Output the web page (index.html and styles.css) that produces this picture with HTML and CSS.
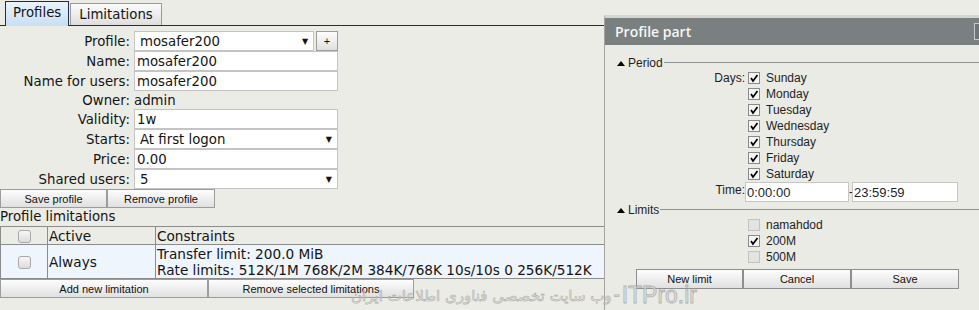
FILE: index.html
```html
<!DOCTYPE html>
<html lang="en">
<head>
<meta charset="utf-8">
<title>User Manager - Profiles</title>
<link rel="stylesheet" href="styles.css">
</head>
<body>
<div class="page">
  <div class="tabs">
    <div class="tab active">Profiles</div>
    <div class="tab">Limitations</div>
  </div>

  <div class="form">
    <label>Profile:</label>
    <div class="field-row">
      <div class="select short"><span>mosafer200</span><span class="arrow">&#9660;</span></div>
      <div class="btn plus">+</div>
    </div>

    <label>Name:</label>
    <input type="text" value="mosafer200">

    <label>Name for users:</label>
    <input type="text" value="mosafer200">

    <label>Owner:</label>
    <div class="plain">admin</div>

    <label>Validity:</label>
    <input type="text" value="1w">

    <label>Starts:</label>
    <div class="select"><span>At first logon</span><span class="arrow">&#9660;</span></div>

    <label>Price:</label>
    <input type="text" value="0.00">

    <label>Shared users:</label>
    <div class="select"><span>5</span><span class="arrow">&#9660;</span></div>
  </div>

  <div class="actions">
    <div class="btn w107">Save profile</div>
    <div class="btn w108">Remove profile</div>
  </div>

  <div class="section-title">Profile limitations</div>
  <table class="limits">
    <tr class="head">
      <td class="c-check"><span class="rbox"></span></td>
      <td class="c-active">Active</td>
      <td>Constraints</td>
    </tr>
    <tr class="row">
      <td class="c-check"><span class="rbox"></span></td>
      <td class="c-active">Always</td>
      <td>Transfer limit: 200.0 MiB<br>Rate limits: 512K/1M 768K/2M 384K/768K 10s/10s 0 256K/512K</td>
    </tr>
  </table>

  <div class="actions">
    <div class="btn w208">Add new limitation</div>
    <div class="btn w206">Remove selected limitations</div>
  </div>
</div>

<div class="dialog">
  <div class="dialog-head">Profile part<span class="close"></span></div>
  <div class="dialog-body">
    <div class="group"><span class="tri"></span>Period</div>
    <div class="dgrid">
      <div class="lbl">Days:</div>
      <div class="check"><span class="box on"><svg viewBox="0 0 10 10"><path d="M2 5 L4 8 L8.5 2"/></svg></span>Sunday</div>
      <div></div>
      <div class="check"><span class="box on"><svg viewBox="0 0 10 10"><path d="M2 5 L4 8 L8.5 2"/></svg></span>Monday</div>
      <div></div>
      <div class="check"><span class="box on"><svg viewBox="0 0 10 10"><path d="M2 5 L4 8 L8.5 2"/></svg></span>Tuesday</div>
      <div></div>
      <div class="check"><span class="box on"><svg viewBox="0 0 10 10"><path d="M2 5 L4 8 L8.5 2"/></svg></span>Wednesday</div>
      <div></div>
      <div class="check"><span class="box on"><svg viewBox="0 0 10 10"><path d="M2 5 L4 8 L8.5 2"/></svg></span>Thursday</div>
      <div></div>
      <div class="check"><span class="box on"><svg viewBox="0 0 10 10"><path d="M2 5 L4 8 L8.5 2"/></svg></span>Friday</div>
      <div></div>
      <div class="check"><span class="box on"><svg viewBox="0 0 10 10"><path d="M2 5 L4 8 L8.5 2"/></svg></span>Saturday</div>
    </div>
    <div class="time-row">
      <div class="lbl">Time:</div>
      <input type="text" class="t1" value="0:00:00">
      <span class="dash">-</span>
      <input type="text" class="t2" value="23:59:59">
    </div>

    <div class="group"><span class="tri"></span>Limits</div>
    <div class="dgrid">
      <div></div>
      <div class="check"><span class="box"></span>namahdod</div>
      <div></div>
      <div class="check"><span class="box on"><svg viewBox="0 0 10 10"><path d="M2 5 L4 8 L8.5 2"/></svg></span>200M</div>
      <div></div>
      <div class="check"><span class="box"></span>500M</div>
    </div>

    <div class="dialog-actions">
      <div class="btn w107">New limit</div>
      <div class="btn w108">Cancel</div>
      <div class="btn w108">Save</div>
    </div>
  </div>
</div>

<div class="watermark"><span class="fa">وب سایت تخصصی فناوری اطلاعات ایران</span><span class="sep">-</span>ITPro.ir</div>
</body>
</html>
```

FILE: styles.css
```css
body {
  margin: 0;
  background: #ecece6;
  font-family: "DejaVu Sans", Verdana, sans-serif;
  font-size: 13.3px;
  color: #141414;
}

.page {
  width: 979px;
}

/* tabs */
.tabs {
  display: flex;
  align-items: flex-end;
  height: 25px;
  padding-left: 5px;
  border-bottom: 1px solid #1f2d4d;
}

.tab {
  box-sizing: border-box;
  height: 22px;
  padding: 0 8px;
  margin-left: 1px;
  border: 1px solid #9a9a9a;
  border-bottom: none;
  background: linear-gradient(#fbfbfb, #dedede);
  line-height: 22px;
}

.tab.active {
  height: 25px;
  margin-left: 0;
  margin-bottom: -1px;
  padding: 0 7px;
  border-color: #1f2d4d;
  background: linear-gradient(#eaf3fb, #c8dff2);
  line-height: 22px;
}

/* profile form */
.form {
  display: grid;
  grid-template-columns: 130px 204px;
  grid-template-rows: 20px 20px 20px 18px 20px 20px 20px 20px;
  column-gap: 4px;
  align-items: center;
  margin-top: 5px;
}

.form label {
  text-align: right;
}

.form input,
.select {
  box-sizing: border-box;
  width: 204px;
  height: 20px;
  margin: 0;
  padding: 0 2px;
  border: 1px solid #c4c4c4;
  background: #fff;
  font-family: "DejaVu Sans", Verdana, sans-serif;
  font-size: 13.3px;
  color: #141414;
  outline: none;
}

.select {
  display: flex;
  justify-content: space-between;
  align-items: center;
  padding: 0 5px 0 5px;
}

.select.short {
  width: 181px;
}

.select .arrow {
  font-size: 8px;
}

.field-row {
  display: flex;
  gap: 2px;
  align-items: center;
}

/* buttons */
.btn {
  box-sizing: border-box;
  display: flex;
  align-items: center;
  justify-content: center;
  height: 19px;
  border: 1px solid #9c9c9c;
  background: linear-gradient(#fdfdfd, #e0e0e0);
  font-family: "Liberation Sans", Arial, sans-serif;
  font-size: 11px;
  color: #111;
}

.btn.plus {
  width: 22px;
  height: 20px;
}

.w107 { width: 107px; }
.w108 { width: 108px; }
.w206 { width: 206px; }
.w208 { width: 208px; }

.actions {
  display: flex;
}

.section-title {
  height: 18px;
  line-height: 18px;
}

/* limitations table */
.limits {
  width: 720px;
  border-collapse: collapse;
  border: 1px solid #8c8c8c;
  font-size: 13.65px;
}

.limits td {
  border: 1px solid #8c8c8c;
  padding: 0 1px;
  line-height: 16px;
}

.limits .head td {
  height: 17px;
}

.limits .row td {
  height: 33px;
  background: #eef5fc;
}

.limits .c-check {
  width: 44px;
  text-align: center;
}

.limits .c-active {
  width: 105px;
}

.rbox {
  display: inline-block;
  box-sizing: border-box;
  width: 13px;
  height: 13px;
  border: 1px solid #a9a9a9;
  border-radius: 3px;
  background: linear-gradient(#f7f7f7, #dcdcdc);
  vertical-align: middle;
}

/* dialog */
.dialog {
  position: absolute;
  left: 604px;
  top: 15px;
  width: 380px;
  height: 295px;
  background: #ebebe6;
  border-left: 1px solid #a4a4a0;
  border-top: 3px solid #d6d6d1;
  font-family: "Liberation Sans", Arial, sans-serif;
  font-size: 12px;
  color: #1e1e1e;
}

.dialog-head {
  position: relative;
  height: 27px;
  padding-left: 10px;
  background: #7a7f7f;
  color: #f6f6f6;
  font-family: "Open Sans", sans-serif;
  font-weight: 600;
  font-size: 14px;
  line-height: 27px;
}

.close {
  position: absolute;
  left: 369px;
  top: 5px;
  width: 12px;
  height: 15px;
  border: 1px solid #c8c8c8;
  background: #6f7474;
}

.dialog-body {
  padding-top: 11px;
}

.group {
  display: flex;
  align-items: center;
  height: 14px;
  padding-left: 12px;
}

.group::after {
  content: "";
  flex: 1;
  margin-left: 1px;
  margin-top: -2px;
  border-top: 1px solid #8f8f8f;
}

.tri {
  width: 0;
  height: 0;
  margin-right: 3px;
  border-left: 4.5px solid transparent;
  border-right: 4.5px solid transparent;
  border-bottom: 5px solid #000;
}

.dgrid {
  display: grid;
  grid-template-columns: 140px 1fr;
  grid-auto-rows: 16px;
  align-items: center;
}

.lbl {
  text-align: right;
}

.check {
  display: flex;
  align-items: center;
  gap: 6px;
  margin-left: 3px;
}

.box {
  box-sizing: border-box;
  width: 12px;
  height: 12px;
  border: 1px solid #c2c2c2;
  background: #e3e3e1;
}

.box.on {
  border-color: #8a8a8a;
  background: #f4f4f2;
}

.box svg {
  display: block;
  width: 10px;
  height: 10px;
}

.box path {
  fill: none;
  stroke: #000;
  stroke-width: 1.7;
}

.time-row {
  display: flex;
  height: 20px;
}

.time-row .lbl {
  width: 140px;
  margin-top: 1px;
}

.time-row input {
  box-sizing: border-box;
  height: 20px;
  margin: 0;
  padding: 0 1px;
  border: 1px solid #c6c6c6;
  background: #fff;
  font-family: "Liberation Sans", Arial, sans-serif;
  font-size: 13px;
  color: #1e1e1e;
  outline: none;
}

.time-row .t1 { width: 104px; }
.time-row .t2 { width: 106px; }

.dash {
  width: 3px;
  line-height: 20px;
}

.time-row + .group {
  margin-top: 1px;
}

.dialog-actions {
  display: flex;
  margin-top: 4px;
  padding-left: 31px;
}

.dialog-actions .btn {
  height: 20px;
  border-color: #8e8e8e;
}

/* site watermark */
.watermark {
  position: absolute;
  left: 351px;
  top: 282px;
  display: flex;
  align-items: center;
  font-family: "Liberation Sans", "DejaVu Sans", sans-serif;
  font-size: 23px;
  color: #e2e2de;
  -webkit-text-stroke: 0.8px #a2a2a2;
  opacity: 0.8;
  white-space: nowrap;
}

.watermark .fa {
  font-family: "DejaVu Sans", sans-serif;
  font-size: 15px;
  -webkit-text-stroke: 0.6px #a2a2a2;
}

.watermark .sep {
  margin: 0 2px 0 2px;
  font-size: 18px;
}
```
